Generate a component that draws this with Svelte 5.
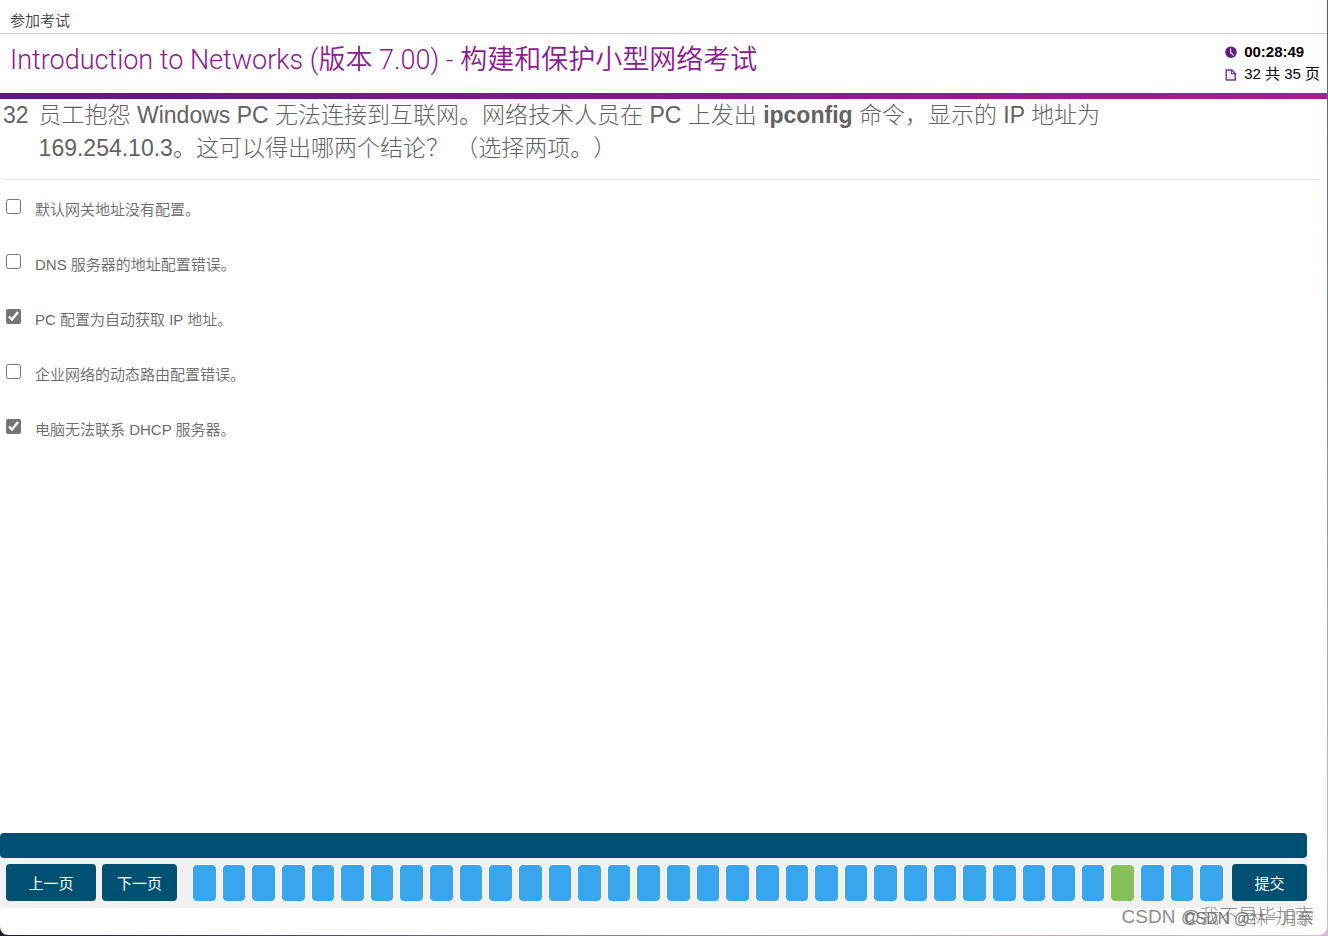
<script>
  const questionCount = 35;
  const current = 32;
  const pages = Array.from({ length: questionCount }, (_, i) => i + 1);

  let answers = $state([
    { id: 'a1', text: '默认网关地址没有配置。', checked: false },
    { id: 'a2', text: 'DNS 服务器的地址配置错误。', checked: false },
    { id: 'a3', text: 'PC 配置为自动获取 IP 地址。', checked: true },
    { id: 'a4', text: '企业网络的动态路由配置错误。', checked: false },
    { id: 'a5', text: '电脑无法联系 DHCP 服务器。', checked: true }
  ]);
</script>

<div class="desktop">
  <div class="window">
    <div class="crumb">参加考试</div>

    <header>
      <h1>Introduction to Networks (版本 7.00) - 构建和保护小型网络考试</h1>
      <div class="status">
        <div class="row time">
          <svg viewBox="0 0 12 12" width="12" height="12" aria-hidden="true">
            <circle cx="6" cy="6.2" r="5.8" fill="#641c80" />
            <path d="M5.6 2.4V6.4L8.6 9.4" fill="none" stroke="#fff" stroke-width="1.1" />
          </svg>
          <span>00:28:49</span>
        </div>
        <div class="row">
          <svg viewBox="0 0 12 14" width="12" height="14" aria-hidden="true">
            <path d="M1.2 3H6.8L10.3 6.4V13H1.2Z" fill="#f3edf5" stroke="#743890" stroke-width="1.4" stroke-linejoin="round" />
            <path d="M6.5 3V6.6H10.3" fill="none" stroke="#743890" stroke-width="1.2" />
          </svg>
          <span>32 共 35 页</span>
        </div>
      </div>
    </header>
    <div class="rule"></div>

    <main>
      <div class="question">
        <span class="number">{current}</span>
        <p>员工抱怨 Windows PC 无法连接到互联网。网络技术人员在 PC 上发出 <b>ipconfig</b> 命令，显示的 IP 地址为 169.254.10.3。这可以得出哪两个结论？ （选择两项。）</p>
      </div>
      <ul>
        {#each answers as answer (answer.id)}
          <li>
            <input type="checkbox" id={answer.id} bind:checked={answer.checked} />
            <label for={answer.id}>{answer.text}</label>
          </li>
        {/each}
      </ul>
    </main>

    <footer>
      <div class="band"></div>
      <nav>
        <button class="action prev">上一页</button>
        <button class="action next">下一页</button>
        <div class="pages">
          {#each pages as page}
            <button class="page" class:current={page === current} aria-label={`${page}`}></button>
          {/each}
        </div>
        <button class="action submit">提交</button>
      </nav>
    </footer>
  </div>
  <span class="mark large">CSDN @我不是毕加索</span>
  <span class="mark small">CSDN @林一月亲</span>
</div>

<style>
  :global(body) {
    margin: 0;
    background: #fff;
  }

  .desktop {
    position: relative;
    box-sizing: border-box;
    min-height: 100vh;
    padding: 0 1px 1px 0;
    display: flex;
    background:
      linear-gradient(180deg, #465d86, #8f93ab 50%, #d3bfcb) right / 1px 100% no-repeat,
      linear-gradient(90deg, #171c2e, #3a3b4a 16%, #85848c 45%, #b9a9b4 75%, #d3bfcb);
    font-family: "Liberation Sans", "Noto Sans CJK SC", sans-serif;
    text-spacing-trim: space-all;
  }

  .window {
    flex: 1;
    min-width: 0;
    display: flex;
    flex-direction: column;
    background: #fff;
    border-radius: 0 0 8px 8px;
  }

  .crumb {
    height: 33px;
    padding: 0 10px;
    border-bottom: 1px solid #c8c8c8;
    font-family: "Noto Sans CJK SC", sans-serif;
    font-size: 15px;
    font-weight: 350;
    line-height: 40px;
    color: #444;
  }

  header {
    display: flex;
    justify-content: space-between;
    padding: 0 7px 0 10px;
    height: 59px;
  }

  h1 {
    margin: 0;
    font-family: Roboto, "Noto Sans CJK SC", sans-serif;
    font-size: 27px;
    font-weight: 350;
    line-height: 53px;
    color: #8b1c8f;
  }

  .status {
    padding-top: 7px;
    font-size: 15px;
    line-height: 22px;
    color: #000;
  }

  .row {
    display: flex;
    align-items: center;
    gap: 7px;
    height: 22px;
    white-space: nowrap;
  }

  .time {
    font-weight: bold;
  }

  .rule {
    height: 6px;
    background: linear-gradient(90deg, #5f187f, #a61e93);
  }

  main {
    flex: 1;
    padding: 0 8px 0 3px;
    color: #626264;
  }

  .question {
    display: flex;
    gap: 10px;
    padding-bottom: 14px;
    border-bottom: 1px solid #e8e8e8;
    font-size: 23px;
    font-weight: 300;
    line-height: 33px;
  }

  .question p {
    margin: 0;
    max-width: 1068px;
  }

  b {
    font-weight: 700;
  }

  ul {
    list-style: none;
    margin: 0;
    padding: 19px 0 0;
    display: grid;
    gap: 33px;
  }

  li {
    display: flex;
    gap: 14px;
    font-size: 15px;
    font-weight: 350;
    line-height: 22px;
    color: #6a6a6a;
  }

  input {
    width: 15px;
    height: 15px;
    margin: 0 0 0 3px;
    accent-color: #757575;
  }

  footer {
    padding: 0 20px 27px 0;
  }

  .band {
    height: 25px;
    border-radius: 4px;
    background: #005073;
  }

  nav {
    display: flex;
    padding: 6px 0 6px 6px;
    background: #f1f1f1;
    border-radius: 0 0 4px 4px;
  }

  button {
    padding: 0;
    border: 0;
    cursor: pointer;
    font-family: "Noto Sans CJK SC", sans-serif;
  }

  .action {
    width: 75px;
    height: 37px;
    border-radius: 4px;
    background: #005073;
    color: #fff;
    font-size: 15px;
  }

  .prev {
    width: 90px;
    margin-right: 6px;
  }

  .pages {
    flex: 1;
    display: flex;
    gap: 5px;
    margin: 0 8px 0 15px;
  }

  .page {
    flex: 1;
    height: 38px;
    border: 1px solid #fff;
    border-radius: 5px;
    background: #39a5ec;
  }

  .page.current {
    background: #84c159;
  }

  .mark {
    position: absolute;
    right: 14px;
    bottom: 5px;
    white-space: nowrap;
    font-weight: 300;
  }

  .large {
    font-size: 19px;
    line-height: 28px;
    color: #8c8c8c;
  }

  .small {
    font-size: 16px;
    line-height: 24px;
    color: #777;
  }
</style>
